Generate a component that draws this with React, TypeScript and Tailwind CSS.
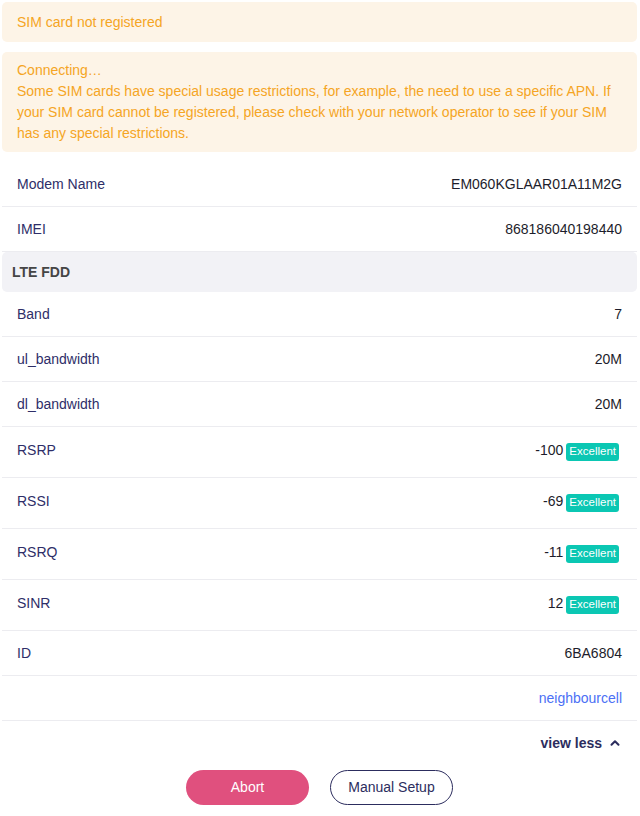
import { ChevronUp } from 'lucide-react'

type Row = { label: string; value: string; badge?: string; link?: boolean }

const modemRows: Row[] = [
  { label: 'Modem Name', value: 'EM060KGLAAR01A11M2G' },
  { label: 'IMEI', value: '868186040198440' },
]

const lteRows: Row[] = [
  { label: 'Band', value: '7' },
  { label: 'ul_bandwidth', value: '20M' },
  { label: 'dl_bandwidth', value: '20M' },
  { label: 'RSRP', value: '-100', badge: 'Excellent' },
  { label: 'RSSI', value: '-69', badge: 'Excellent' },
  { label: 'RSRQ', value: '-11', badge: 'Excellent' },
  { label: 'SINR', value: '12', badge: 'Excellent' },
  { label: 'ID', value: '6BA6804' },
  { label: '', value: 'neighbourcell', link: true },
]

function InfoRow({ row }: { row: Row }) {
  return (
    <div
      className={`flex items-center justify-between border-b border-[#ececf0] px-[15px] text-[14px] ${row.badge ? 'h-[51px]' : 'h-[45px]'}`}
    >
      <span className={`text-[#2e2e68] ${row.badge ? '-mt-[3px]' : ''}`}>{row.label}</span>
      {row.link ? (
        <a href="#" className="text-[#4b70f5]">
          {row.value}
        </a>
      ) : (
        <span className="flex items-center gap-[3px] text-[#1d1d2b]">
          <span className={row.badge ? '-mt-[3px]' : ''}>{row.value}</span>
          {row.badge && (
            <span className="mr-[3px] flex h-[18px] items-center rounded-[3px] bg-[#0bc7b3] px-[3px] text-[11.5px] text-white">
              {row.badge}
            </span>
          )}
        </span>
      )}
    </div>
  )
}

export default function App() {
  return (
    <div className="min-h-[816px] bg-white pt-[2px] pr-[3px] pl-[2px] font-['Liberation_Sans',Arial,sans-serif]">
      <div className="flex flex-col gap-[10px]">
        <div className="rounded-[5px] bg-[#fdf4e7] px-[15px] py-[10px] text-[14px] leading-5 text-[#f5a524]">
          SIM card not registered
        </div>
        <div className="rounded-[5px] bg-[#fdf4e7] px-[15px] py-2 text-[14px] leading-[21px] text-[#f5a524]">
          <p>Connecting…</p>
          <p>
            Some SIM cards have special usage restrictions, for example, the need to use a specific APN. If
            your SIM card cannot be registered, please check with your network operator to see if your SIM
            has any special restrictions.
          </p>
        </div>
      </div>

      <div className="mt-[10px]">
        {modemRows.map((r) => (
          <InfoRow key={r.label} row={r} />
        ))}
        <div className="flex h-[40px] items-center rounded-[5px] bg-[#f2f2f6] px-[10px] text-[14px] font-bold text-[#454545]">
          LTE FDD
        </div>
        {lteRows.map((r) => (
          <InfoRow key={r.label + r.value} row={r} />
        ))}
      </div>

      <div className="flex h-[44px] items-center justify-end px-[15px]">
        <button className="flex items-center gap-[6px] text-[14px] font-bold text-[#2c2d5e]">
          view less
          <ChevronUp className="h-[14px] w-[14px]" strokeWidth={3.5} />
        </button>
      </div>

      <div className="mt-[5px] flex justify-center gap-[21px]">
        <button className="h-[35px] w-[123px] rounded-full bg-[#e0507e] text-[14px] text-white">
          Abort
        </button>
        <button className="h-[35px] w-[123px] rounded-full border border-[#2c2d5e] text-[14px] text-[#2c2d5e]">
          Manual Setup
        </button>
      </div>
    </div>
  )
}
